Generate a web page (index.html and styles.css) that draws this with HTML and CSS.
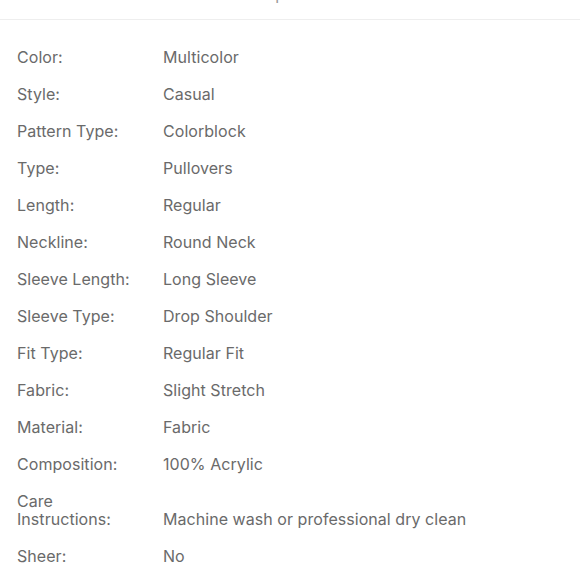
FILE: index.html
```html
<!DOCTYPE html>
<html>
<head>
<meta charset="utf-8">
<link rel="stylesheet" href="styles.css">
</head>
<body>
<header class="top"><h1 class="title">Description</h1></header>
<dl class="specs">
  <div class="row"><dt>Color:</dt><dd>Multicolor</dd></div>
  <div class="row"><dt>Style:</dt><dd>Casual</dd></div>
  <div class="row"><dt>Pattern Type:</dt><dd>Colorblock</dd></div>
  <div class="row"><dt>Type:</dt><dd>Pullovers</dd></div>
  <div class="row"><dt>Length:</dt><dd>Regular</dd></div>
  <div class="row"><dt>Neckline:</dt><dd>Round Neck</dd></div>
  <div class="row"><dt>Sleeve Length:</dt><dd>Long Sleeve</dd></div>
  <div class="row"><dt>Sleeve Type:</dt><dd>Drop Shoulder</dd></div>
  <div class="row"><dt>Fit Type:</dt><dd>Regular Fit</dd></div>
  <div class="row"><dt>Fabric:</dt><dd>Slight Stretch</dd></div>
  <div class="row"><dt>Material:</dt><dd>Fabric</dd></div>
  <div class="row"><dt>Composition:</dt><dd>100% Acrylic</dd></div>
  <div class="row"><dt>Care<br>Instructions:</dt><dd>Machine wash or professional dry clean</dd></div>
  <div class="row"><dt>Sheer:</dt><dd>No</dd></div>
</dl>
</body>
</html>
```
FILE: styles.css
```css
html, body {
  margin: 0;
  padding: 0;
  background: #ffffff;
  font-family: Inter, "Noto Sans", sans-serif;
  color: #6a6a6a;
}
.top {
  height: 19px;
  border-bottom: 1px solid #eeeeee;
  overflow: hidden;
  display: flex;
  justify-content: center;
  align-items: flex-end;
}
.title {
  margin: 0 40px 16px 0;
  font-size: 16px;
  font-weight: 400;
  line-height: 18px;
  color: #999999;
}
.specs {
  margin: 0;
  padding: 19px 0 0 17px;
}
.row {
  display: grid;
  grid-template-columns: 146px 1fr;
  align-items: end;
  padding: 9px 0 10px;
}
dt, dd {
  margin: 0;
  font-size: 16px;
  line-height: 18px;
  letter-spacing: 0.05px;
}
```
